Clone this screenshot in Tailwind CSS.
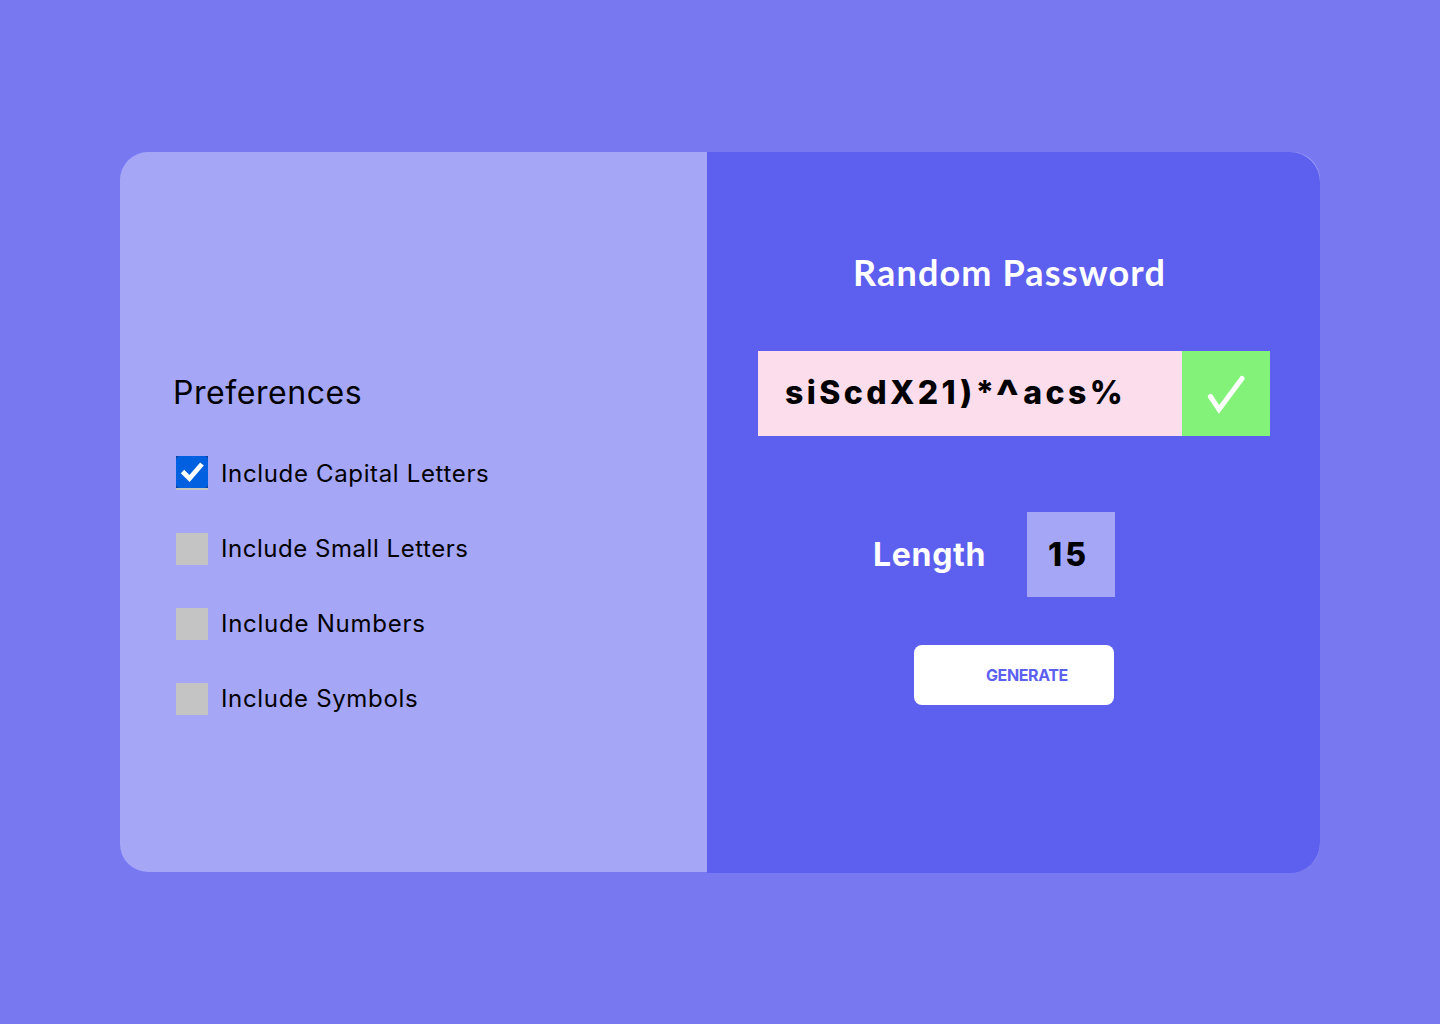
<!DOCTYPE html>
<html lang="en">
<head>
<meta charset="utf-8">
<title>Random Password</title>
<script src="https://cdn.jsdelivr.net/npm/@tailwindcss/browser@4"></script>
</head>
<body class="h-screen overflow-hidden bg-[#7879f1] px-[120px] pt-[152px] font-['Inter',sans-serif] text-black">
<main class="flex h-[721px] w-[1200px]">
  <section class="h-[720px] w-[587px] rounded-l-[28px] bg-[#a5a6f6] pt-[217px]">
    <h2 class="ml-[53px] h-12 text-[32px] leading-[48px] whitespace-nowrap tracking-[0.55px]">Preferences</h2>
    <ul class="mt-[39px] ml-14 text-2xl leading-9 whitespace-nowrap">
      <li class="flex h-[75px]">
        <span class="h-[34px] w-8 bg-[#c4c4c4]">
          <svg class="block size-8" viewBox="0 0 32 32" fill="none"><path fill="#103d91" d="M0 0h32v32H0z"/><rect width="32" height="32" rx="4" fill="#0060df"/><path d="M6.5 15.5l7 7L26 8" stroke="#fff" stroke-width="4.8"/></svg>
        </span>
        <span class="ml-[13px] tracking-[0.65px]">Include Capital Letters</span>
      </li>
      <li class="flex h-[75px]"><span class="mt-0.5 size-8 bg-[#c4c4c4]"></span><span class="ml-[13px] tracking-[0.54px]">Include Small Letters</span></li>
      <li class="flex h-[75px]"><span class="mt-0.5 size-8 bg-[#c4c4c4]"></span><span class="ml-[13px] tracking-[0.74px]">Include Numbers</span></li>
      <li class="flex h-[75px]"><span class="mt-0.5 size-8 bg-[#c4c4c4]"></span><span class="ml-[13px] tracking-[0.67px]">Include Symbols</span></li>
    </ul>
  </section>
  <div class="h-[720px] w-[613px] rounded-r-[28px] bg-[#a5a6f6]">
  <section class="h-[721px] w-[613px] rounded-r-[30px] bg-[#5d5fef] pt-[97px]">
    <h1 class="ml-[146px] h-12 text-[36px] leading-[46px] font-bold whitespace-nowrap text-white font-['Lato',sans-serif] tracking-[1.15px]">Random Password</h1>
    <div class="mt-[54px] ml-[51px] flex h-[85px] w-[512px]">
      <div class="w-[424px] bg-[#fcddec] pl-[27px] text-[32px] leading-[84px] font-extrabold tracking-[3.4px] whitespace-nowrap">siScdX21)*<span class="relative top-[10px] right-0.5 text-[48px] leading-none tracking-[2px]">^</span>acs%</div>
      <div class="w-[88px] bg-[#83f279]">
        <svg class="block h-[85px] w-[88px]" viewBox="0 0 88 85" fill="none"><path d="M28.4 45.5L37 58.5L60 27.5" stroke="#fff" stroke-width="5" stroke-linecap="round"/></svg>
      </div>
    </div>
    <div class="mt-[76px] ml-[166px] flex h-[85px] leading-[86px] font-bold text-[32px] whitespace-nowrap">
      <span class="w-[154px] text-white tracking-[0.7px]">Length</span>
      <span class="h-[85px] w-[88px] bg-[#a5a6f6] pl-[21px] font-extrabold tracking-[3px]">15</span>
    </div>
    <button class="mt-12 ml-[207px] flex h-[60px] w-[200px] items-center rounded-lg bg-white pl-[72px] text-base font-bold tracking-[-0.4px] whitespace-nowrap text-[#5d5fef]">GENERATE</button>
  </section>
  </div>
</main>
</body>
</html>
